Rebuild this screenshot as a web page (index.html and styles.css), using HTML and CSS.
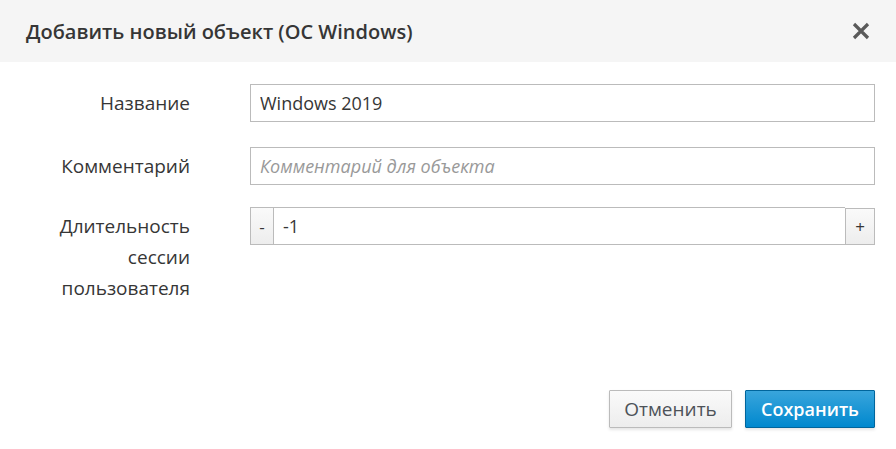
FILE: index.html
```html
<!DOCTYPE html>
<html lang="ru">
<head>
<meta charset="utf-8">
<link rel="stylesheet" href="styles.css">
</head>
<body>
<div class="modal">
  <div class="modal-header">
    <h4 class="modal-title">Добавить новый объект (ОС Windows)</h4>
    <button class="close" aria-label="Закрыть">
      <svg width="20" height="20" viewBox="0 0 20 20"><path d="M3 3 L17 17 M17 3 L3 17" stroke="#5a5a5a" stroke-width="3.2" stroke-linecap="butt"/></svg>
    </button>
  </div>
  <div class="modal-body">
    <div class="form-row">
      <label class="form-label">Название</label>
      <input class="form-control" type="text" value="Windows 2019">
    </div>
    <div class="form-row">
      <label class="form-label">Комментарий</label>
      <input class="form-control" type="text" placeholder="Комментарий для объекта">
    </div>
    <div class="form-row row-spin">
      <label class="form-label multi">Длительность сессии пользователя</label>
      <div class="spinner">
        <button class="spin-btn">-</button>
        <input class="form-control spin-input" type="text" value="-1">
        <button class="spin-btn">+</button>
      </div>
    </div>
  </div>
  <div class="modal-footer">
    <button class="btn btn-default">Отменить</button>
    <button class="btn btn-primary">Сохранить</button>
  </div>
</div>
</body>
</html>
```
FILE: styles.css
```css
* { box-sizing: border-box; }
html, body { margin: 0; padding: 0; background: #fff; }
body { font-family: "Open Sans", "Noto Sans", sans-serif; color: #363636; width: 896px; height: 449px; overflow: hidden; }
.modal { display: flex; flex-direction: column; height: 449px; }
.modal-header {
  background: #f5f5f5;
  height: 62px;
  display: flex;
  align-items: center;
  justify-content: space-between;
  padding: 0 25px 0 26px;
}
.modal-title { margin: 0; font-size: 20px; font-weight: 600; color: #363636; }
.close { border: 0; background: transparent; padding: 0; width: 20px; height: 20px; display: flex; }
.modal-body { padding: 22px 21px 0 0; display: flex; flex-direction: column; gap: 25px; }
.form-row { display: grid; grid-template-columns: 190px 1fr; column-gap: 60px; align-items: start; }
.row-spin { margin-top: -3px; }
.form-label { text-align: right; font-size: 19px; line-height: 38px; color: #363636; padding-left: 40px; }
.form-label.multi { line-height: 31px; padding-top: 4px; }
.form-control {
  height: 38px;
  border: 1px solid #bbb;
  font-family: inherit;
  font-size: 18px;
  color: #363636;
  padding: 0 9px;
  width: 100%;
  outline: none;
  background: #fff;
}
.form-control::placeholder { color: #999; font-style: italic; }
.spinner { display: flex; }
.spin-btn {
  width: 24px; height: 38px;
  border: 1px solid #bbb;
  background: linear-gradient(#fafafa, #ededed);
  font-family: inherit; font-size: 17px; color: #363636; padding: 0;
}
.spin-btn:last-child { width: 30px; margin-top: 1px; height: 37px; }
.spin-input { flex: 1; border-left: 0; border-right: 0; padding-left: 9px; }
.modal-footer { margin-top: auto; display: flex; justify-content: flex-end; gap: 13px; padding: 0 21px 21px 0; }
.btn {
  height: 38px; font-family: inherit; font-size: 18px; padding: 0;
  box-shadow: 0 2px 3px rgba(0,0,0,0.1);
  border-radius: 1px;
}
.btn-default { width: 123px; border: 1px solid #bbb; background: linear-gradient(#fafafa, #ededed); color: #4d5258; font-size: 19px; }
.btn-primary { width: 130px; border: 1px solid #00659c; background: linear-gradient(#39a5dc, #0088ce); color: #fff; font-weight: 600; }
```
